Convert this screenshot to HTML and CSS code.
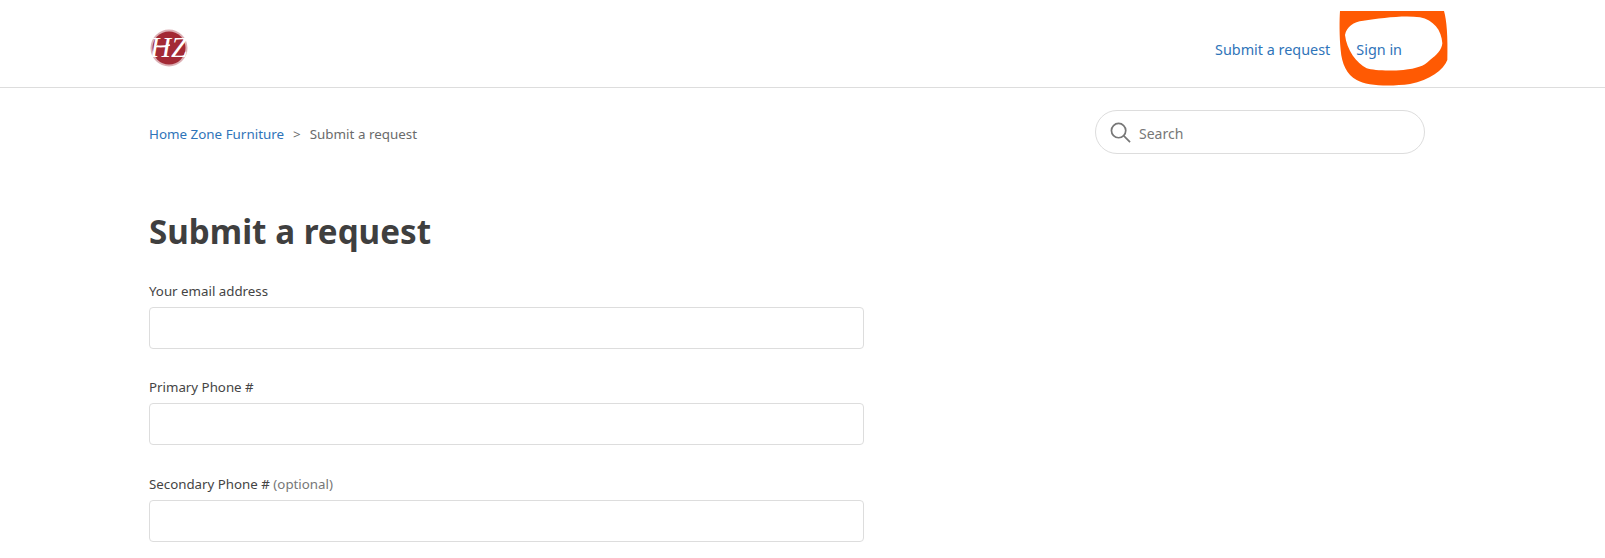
FILE: index.html
```html
<!DOCTYPE html>
<html lang="en">
<head>
    <meta charset="UTF-8">
    <meta name="viewport" content="width=device-width, initial-scale=1.0">
    <title>Submit a request – Home Zone Furniture</title>
    <link rel="stylesheet" href="styles.css">
</head>
<body>
    <header class="header">
        <div class="container header-inner">
            <a class="logo" href="#" aria-label="Home Zone Furniture">
                <svg width="39" height="38" viewBox="0 0 39 38">
                    <circle cx="20" cy="19" r="18.5" fill="#dcb0b5"/>
                    <circle cx="20" cy="19" r="16.5" fill="#a32a35"/>
                    <text class="logo-text" x="19.5" y="28" text-anchor="middle">HZ</text>
                    <path d="M8 17c5 1 9 0 13-1" fill="none" stroke="white" stroke-width="1.6"/>
                </svg>
            </a>
            <nav class="nav">
                <a href="#">Submit a request</a>
                <a href="#">Sign in</a>
            </nav>
        </div>
    </header>

    <!-- orange marker scribble drawn over the screenshot -->
    <svg class="scribble" width="270" height="100" viewBox="0 0 810 300">
        <path fill="#ff5a03" fill-rule="evenodd" d="M450 33 L762 33 C770 60 774 110 772 180 C760 210 720 240 660 252 C600 260 530 258 500 240 C470 225 455 190 452 150 C448 110 448 60 450 33 Z M465 105 C470 80 490 65 520 62 C570 55 640 45 690 52 C730 60 755 90 757 130 C755 150 740 165 720 180 C700 200 680 205 640 210 C600 213 550 212 530 205 C500 190 470 150 465 105 Z"/>
    </svg>

    <main class="container">
        <div class="sub-nav">
            <ol class="breadcrumbs">
                <li><a href="#">Home Zone Furniture</a></li>
                <li class="sep">&gt;</li>
                <li>Submit a request</li>
            </ol>
            <div class="search">
                <svg width="21" height="21" viewBox="0 0 22 22" fill="none" stroke="#777" stroke-width="1.8">
                    <circle cx="9" cy="9" r="7.5"/>
                    <path d="M14.5 14.5l6.5 6.5"/>
                </svg>
                <input class="search-input" type="text" placeholder="Search">
            </div>
        </div>

        <h1>Submit a request</h1>

        <form class="request-form">
            <div class="field">
                <label>Your email address</label>
                <input type="text">
            </div>
            <div class="field">
                <label>Primary Phone #</label>
                <input type="text">
            </div>
            <div class="field">
                <label>Secondary Phone # <span class="optional">(optional)</span></label>
                <input type="text">
            </div>
        </form>
    </main>
</body>
</html>
```

FILE: styles.css
```css
body {
    margin: 0;
    font-family: "Noto Sans", "Open Sans", Arial, sans-serif;
    font-size: 14px;
    color: #444;
    background: white;
}
a {
    color: #2f74b9;
    text-decoration: none;
}
.container {
    width: 1276px;
    margin-left: 149px;
}
.header {
    height: 87px;
    border-bottom: 1px solid #ddd;
}
.header-inner {
    display: flex;
    justify-content: space-between;
    align-items: center;
    height: 100%;
}
.logo {
    display: block;
    height: 38px;
    margin-top: 8px;
}
.logo-text {
    font-family: "Liberation Serif", serif;
    font-style: italic;
    font-size: 29px;
    fill: white;
}
.nav {
    display: flex;
    gap: 26px;
    padding-right: 23px;
    margin-top: 12px;
    font-size: 14.4px;
}
.scribble {
    position: absolute;
    left: 1190px;
    top: 0;
}
.sub-nav {
    display: flex;
    justify-content: space-between;
    align-items: center;
    margin-top: 22px;
}
.breadcrumbs {
    display: flex;
    gap: 9px;
    margin: 4px 0 0;
    padding: 0;
    list-style: none;
    font-size: 13.4px;
    color: #6b6b6b;
}
.search {
    display: flex;
    align-items: center;
    gap: 8px;
    box-sizing: border-box;
    width: 330px;
    height: 44px;
    padding: 0 15px 0 14px;
    border: 1px solid #ddd;
    border-radius: 22px;
}
.search-input {
    flex: 1;
    min-width: 0;
    border: none;
    outline: none;
    padding: 0;
    margin-top: 2px;
    font-family: inherit;
    font-size: 14px;
}
.search-input::placeholder {
    color: #777;
}
h1 {
    margin: 55px 0 0;
    font-size: 33.2px;
    line-height: 46px;
    font-weight: bold;
    color: #3f3f3f;
}
.request-form {
    width: 715px;
    margin-top: 27px;
}
.field {
    margin-bottom: 29.4px;
}
.field label {
    display: block;
    font-size: 13.3px;
    line-height: 18px;
    margin-bottom: 7px;
}
.field input {
    display: block;
    box-sizing: border-box;
    width: 100%;
    height: 42px;
    border: 1px solid #ddd;
    border-radius: 4px;
}
.optional {
    color: #777;
}
```
